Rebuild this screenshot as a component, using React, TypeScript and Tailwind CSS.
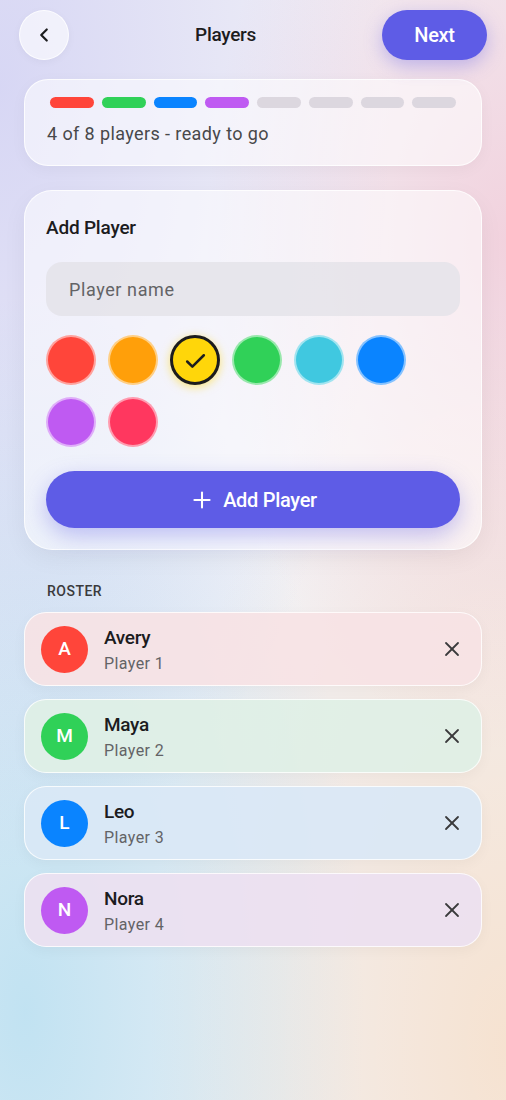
import { Check, ChevronLeft, Plus, X } from 'lucide-react';

const swatches = ['#ff453a', '#ff9f0a', '#ffd60a', '#30d158', '#40c8e0', '#0a84ff', '#bf5af2', '#ff375f'];

const roster = [
  { name: 'Avery', color: '#ff453a', tint: 'bg-[#f7e2e4]/90' },
  { name: 'Maya', color: '#30d158', tint: 'bg-[#dff0e6]/90' },
  { name: 'Leo', color: '#0a84ff', tint: 'bg-[#d9e8f6]/90' },
  { name: 'Nora', color: '#bf5af2', tint: 'bg-[#ece0f1]/90' },
];

const bars = ['#ff453a', '#30d158', '#0a84ff', '#bf5af2', '', '', '', ''];

export default function App() {
  const selected = 2;

  return (
    <div className="min-h-screen bg-[#f2f2f7] bg-[image:radial-gradient(ellipse_at_0%_8%,rgba(120,118,235,0.22),transparent_55%),radial-gradient(ellipse_at_100%_22%,rgba(240,120,150,0.26),transparent_42%),radial-gradient(ellipse_at_5%_92%,rgba(80,190,230,0.3),transparent_50%),radial-gradient(ellipse_at_100%_95%,rgba(255,190,120,0.3),transparent_50%)] font-['Roboto',sans-serif] text-[#1c1c1e]">
      {/* Header */}
      <header className="flex items-center justify-between px-[19px] pt-[10px]">
        <button className="w-[50px] h-[50px] rounded-full bg-white/60 border border-white/80 flex items-center justify-center shadow-[0_2px_8px_rgba(0,0,0,0.04)]">
          <ChevronLeft className="w-[22px] h-[22px] text-[#1c1c1e]" strokeWidth={2.4} />
        </button>
        <h1 className="text-[19px] font-medium tracking-[-0.3px]">Players</h1>
        <button className="h-[50px] w-[105px] rounded-full bg-[#5e5ce6] text-white text-[20px] font-medium tracking-[-0.3px] shadow-[0_6px_18px_rgba(94,92,230,0.35)]">
          Next
        </button>
      </header>

      <main className="px-[24px] pt-[19px]">
        {/* Progress */}
        <section className="rounded-[24px] bg-white/55 border border-white/80 shadow-[0_4px_16px_rgba(0,0,0,0.04)] px-[22px] pt-[17px] pb-[19px]">
          <div className="flex gap-[8px] px-[3px]">
            {bars.map((c, i) => (
              <div
                key={i}
                className={`flex-1 h-[11px] rounded-full ${c ? '' : 'bg-[#dcd7df]'}`}
                style={c ? { backgroundColor: c } : undefined}
              />
            ))}
          </div>
          <p className="mt-[14px] text-[18px] leading-[24px] tracking-[0.4px] text-[#48484a]">4 of 8 players - ready to go</p>
        </section>

        {/* Add player */}
        <section className="mt-[24px] rounded-[28px] bg-white/55 border border-white/80 shadow-[0_8px_24px_rgba(0,0,0,0.05)] px-[21px] pt-[24px] pb-[21px]">
          <h2 className="text-[19px] leading-[26px] font-medium tracking-[-0.2px]">Add Player</h2>
          <div className="mt-[21px] h-[54px] rounded-[16px] bg-[#e4e2e8]/80 flex items-center px-[23px] text-[18px] text-[#636366] tracking-[0.6px]">
            Player name
          </div>
          <div className="mt-[19px] flex flex-wrap gap-[12px]">
            {swatches.map((c, i) => (
              <div
                key={c}
                className={`w-[50px] h-[50px] rounded-full flex items-center justify-center ${
                  i === selected
                    ? 'border-[3px] border-[#1c1c1e] shadow-[0_2px_10px_rgba(255,214,10,0.55)]'
                    : 'border-2 border-white/50'
                }`}
                style={{ backgroundColor: c }}
              >
                {i === selected && <Check className="w-[25px] h-[25px] mt-[2px] text-[#1c1c1e]" strokeWidth={2.4} />}
              </div>
            ))}
          </div>
          <button className="mt-[24px] w-full h-[57px] rounded-full bg-[#5e5ce6] text-white flex items-center justify-center gap-[12px] text-[20px] font-medium tracking-[-0.3px] shadow-[0_8px_22px_rgba(94,92,230,0.35)]">
            <Plus className="w-[26px] h-[26px] -mr-[4px]" strokeWidth={1.9} />
            Add Player
          </button>
        </section>

        {/* Roster */}
        <h3 className="mt-[31px] px-[23px] text-[14px] font-medium tracking-[0.5px] text-[#3a3a3c]">ROSTER</h3>
        <div className="mt-[10px] flex flex-col gap-[13px]">
          {roster.map((p, i) => (
            <div
              key={p.name}
              className={`h-[74px] rounded-[22px] border border-white/80 ${p.tint} flex items-center pl-[16px] pr-[17px] shadow-[0_4px_14px_rgba(0,0,0,0.04)]`}
            >
              <div
                className="w-[47px] h-[47px] rounded-full flex items-center justify-center text-white text-[19px] font-medium"
                style={{ backgroundColor: p.color }}
              >
                {p.name[0]}
              </div>
              <div className="ml-[16px] flex-1 pt-[3px]">
                <div className="text-[19px] leading-[24px] font-medium tracking-[-0.3px]">{p.name}</div>
                <div className="mt-[2px] text-[16px] leading-[24px] text-[#636366] tracking-[0.4px]">Player {i + 1}</div>
              </div>
              <X className="w-[24px] h-[24px] text-[#3a3a3c]" strokeWidth={1.8} />
            </div>
          ))}
        </div>
      </main>
    </div>
  );
}
